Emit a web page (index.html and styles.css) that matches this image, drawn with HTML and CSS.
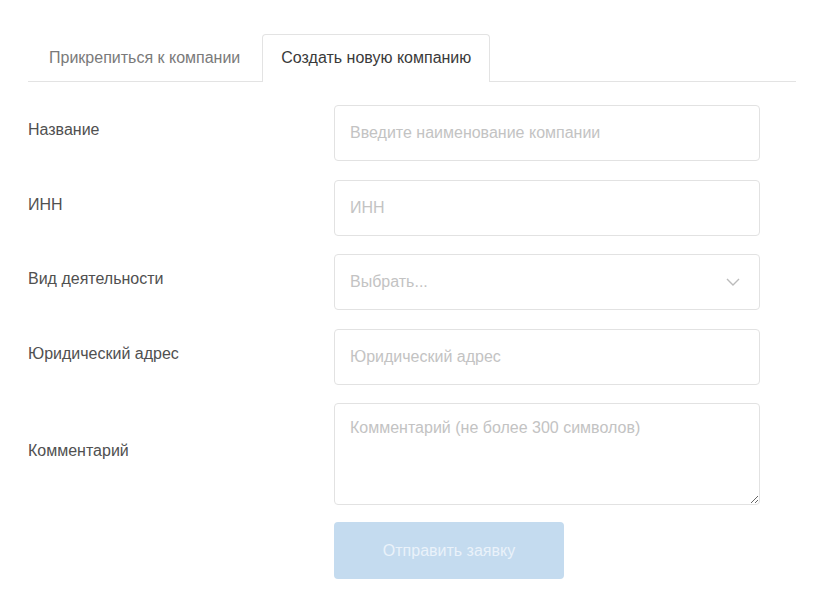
FILE: index.html
```html
<!DOCTYPE html>
<html lang="ru">
<head>
  <meta charset="UTF-8">
  <title>Компания</title>
  <link rel="stylesheet" href="styles.css">
</head>
<body>
  <div class="company">
    <ul class="tabs">
      <li class="tab">Прикрепиться к компании</li>
      <li class="tab is-active">Создать новую компанию</li>
    </ul>
    <form class="company-form">
      <div class="row">
        <label class="label" for="name">Название</label>
        <input class="field" id="name" type="text" placeholder="Введите наименование компании">
      </div>
      <div class="row">
        <label class="label" for="inn">ИНН</label>
        <input class="field" id="inn" type="text" placeholder="ИНН">
      </div>
      <div class="row">
        <label class="label">Вид деятельности</label>
        <div class="field select">
          <span class="select-value">Выбрать...</span>
          <svg class="chevron" width="14" height="8" viewBox="0 0 14 8">
            <polyline points="1,1 7,7 13,1" fill="none" stroke="#bbb" stroke-width="1.4"/>
          </svg>
        </div>
      </div>
      <div class="row">
        <label class="label" for="address">Юридический адрес</label>
        <input class="field" id="address" type="text" placeholder="Юридический адрес">
      </div>
      <div class="row">
        <label class="label" for="comment">Комментарий</label>
        <textarea class="field area" id="comment" placeholder="Комментарий (не более 300 символов)"></textarea>
      </div>
      <div class="row actions">
        <button class="submit" type="button" disabled>Отправить заявку</button>
      </div>
    </form>
  </div>
</body>
</html>
```

FILE: styles.css
```css
body{
  margin:0;
  background:#fff;
  font-family:"Liberation Sans", Arial, sans-serif;
  font-size:16px;
  color:#505050;
}
.company{
  width:768px;
  padding:34px 0 0 28px;
}
ul.tabs{
  display:flex;
  margin:0;
  padding:0;
  list-style:none;
  border-bottom:1px solid #e3e3e3;
}
.tab{
  padding:13px 20px 13px 20px;
  line-height:20px;
  color:#7a7a7a;
  border:1px solid transparent;
  border-bottom:none;
  border-radius:4px 4px 0 0;
  margin-bottom:-1px;
  cursor:pointer;
}
.tab.is-active{
  color:#3a3a3a;
  background:#fff;
  border-color:#e3e3e3;
  padding:13px 18px 14px 18px;
  margin-left:1px;
}
.company-form{
  padding-top:23px;
}
.row{
  display:flex;
  align-items:center;
  margin-bottom:18.5px;
}
.label{
  width:306px;
  padding-bottom:6px;
  color:#505050;
  line-height:20px;
}
.field{
  box-sizing:border-box;
  width:426px;
  height:56px;
  margin:0;
  padding:0 15px;
  border:1px solid #e2e2e2;
  border-radius:4px;
  background:#fff;
  font-family:inherit;
  font-size:16px;
  color:#333;
  outline:none;
}
.field::placeholder{
  color:#c3c3c3;
}
.select{
  display:flex;
  align-items:center;
  justify-content:space-between;
  padding-right:19px;
}
.select-value{
  color:#c3c3c3;
}
.area{
  height:102px;
  padding:14px 15px;
  line-height:20px;
  resize:vertical;
}
.actions{
  padding-left:306px;
  margin-top:-1.5px;
}
.submit{
  width:230px;
  height:57px;
  border:none;
  border-radius:4px;
  background:#c4dbef;
  color:#eaf2fa;
  font-family:inherit;
  font-size:16px;
}
```
